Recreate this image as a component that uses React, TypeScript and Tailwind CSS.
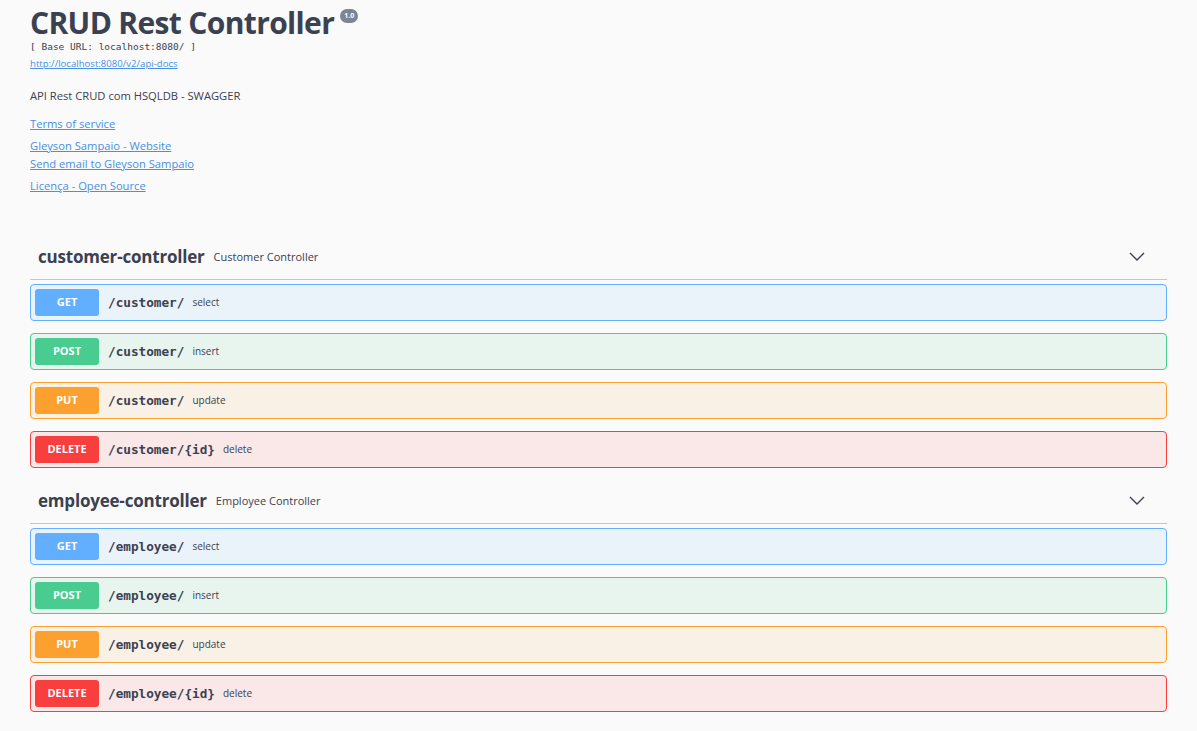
import React from "react";

type Op = { method: "GET" | "POST" | "PUT" | "DELETE"; path: string; desc: string };

const styles: Record<Op["method"], { block: string; badge: string }> = {
  GET: { block: "bg-[#ebf3fa] border-[#61affe]", badge: "bg-[#61affe]" },
  POST: { block: "bg-[#e8f5ef] border-[#49cc90]", badge: "bg-[#49cc90]" },
  PUT: { block: "bg-[#faf1e6] border-[#fca130]", badge: "bg-[#fca130]" },
  DELETE: { block: "bg-[#fae7e7] border-[#f93e3e]", badge: "bg-[#f93e3e]" },
};

function Chevron() {
  return (
    <svg width="16" height="9" viewBox="0 0 16 9" fill="none" className="-mt-[2px]">
      <path d="M1 1 L8 8 L15 1" stroke="#3b4151" strokeWidth="1.4" />
    </svg>
  );
}

function OpBlock({ op }: { op: Op }) {
  const s = styles[op.method];
  return (
    <div className={`flex items-center h-[37px] border rounded-[4px] px-[4px] ${s.block}`}>
      <div
        className={`w-[64px] h-[27px] rounded-[3px] flex items-center justify-center text-white text-[11px] font-bold ${s.badge}`}
      >
        {op.method}
      </div>
      <span
        className="ml-[9px] text-[12.7px] font-bold text-[#3b4151]"
        style={{ fontFamily: '"DejaVu Sans Mono", "Liberation Mono", monospace' }}
      >
        {op.path}
      </span>
      <span className="ml-[8px] text-[10px] text-[#3b4151]">{op.desc}</span>
    </div>
  );
}

function Section({ name, desc, ops }: { name: string; desc: string; ops: Op[] }) {
  return (
    <div className="flex flex-col">
      <div className="flex items-center h-[45px] border-b border-[#c3c6cc] pl-[8px] pr-[22px]">
        <span className="text-[17px] font-bold text-[#3b4151] tracking-[-0.2px]">{name}</span>
        <span className="ml-[9px] text-[11px] text-[#3b4151]">{desc}</span>
        <div className="flex-1" />
        <Chevron />
      </div>
      <div className="pt-[4px] flex flex-col gap-[12px]">
        {ops.map((o, i) => (
          <OpBlock key={i} op={o} />
        ))}
      </div>
    </div>
  );
}

export default function App() {
  const mk = (base: string): Op[] => [
    { method: "GET", path: `/${base}/`, desc: "select" },
    { method: "POST", path: `/${base}/`, desc: "insert" },
    { method: "PUT", path: `/${base}/`, desc: "update" },
    { method: "DELETE", path: `/${base}/{id}`, desc: "delete" },
  ];
  return (
    <div
      className="min-h-[731px] w-full bg-[#fafafa] text-[#3b4151] px-[30px] pt-[5px]"
      style={{ fontFamily: '"Open Sans", "Noto Sans", sans-serif' }}
    >
      <div className="flex items-start">
        <h2 className="text-[30px] leading-[36px] font-bold tracking-[-0.65px] text-[#3b4151]">
          CRUD Rest Controller
        </h2>
        <span className="ml-[6px] mt-[4px] h-[14px] px-[4px] rounded-full bg-[#7d8492] text-white text-[7px] font-bold flex items-center">
          1.0
        </span>
      </div>
      <div
        className="text-[9.5px] leading-[12px] text-[#3b4151]"
        style={{ fontFamily: '"DejaVu Sans Mono", "Liberation Mono", monospace' }}
      >
        [ Base URL: localhost:8080/ ]
      </div>
      <div className="mt-[4px] text-[9.6px] leading-[14px]">
        <a className="text-[#4990e2] underline">http://localhost:8080/v2/api-docs</a>
      </div>
      <div className="mt-[17px] text-[11.2px] leading-[16px]">API Rest CRUD com HSQLDB - SWAGGER</div>
      <div className="mt-[12px] text-[11.2px] leading-[16px]">
        <a className="text-[#4990e2] underline">Terms of service</a>
      </div>
      <div className="mt-[6px] text-[11.2px] leading-[16px]">
        <a className="text-[#4990e2] underline">Gleyson Sampaio - Website</a>
      </div>
      <div className="mt-[2px] text-[11.2px] leading-[16px]">
        <a className="text-[#4990e2] underline">Send email to Gleyson Sampaio</a>
      </div>
      <div className="mt-[6px] text-[11.2px] leading-[16px]">
        <a className="text-[#4990e2] underline">Licença - Open Source</a>
      </div>
      <div className="pt-[41px] flex flex-col gap-[11px]">
        <Section name="customer-controller" desc="Customer Controller" ops={mk("customer")} />
        <Section name="employee-controller" desc="Employee Controller" ops={mk("employee")} />
      </div>
    </div>
  );
}
